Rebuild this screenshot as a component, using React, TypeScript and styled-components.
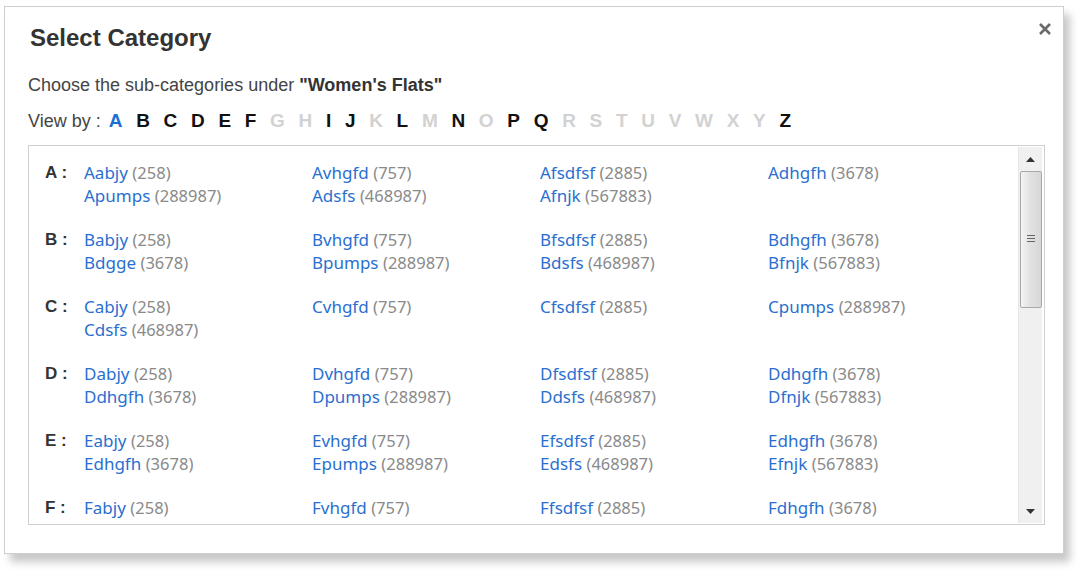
import React from "react";
import styled, { createGlobalStyle } from "styled-components";

const Global = createGlobalStyle`
  html, body { margin: 0; padding: 0; background: #ffffff; }
  body { font-family: "Liberation Sans", Arial, sans-serif; }
  * { box-sizing: border-box; }
`;

const Page = styled.div`
  width: 1080px;
  height: 572px;
  padding: 6px 0 0 4px;
  background: #fff;
`;

const Modal = styled.div`
  position: relative;
  width: 1060px;
  height: 548px;
  background: #fff;
  border: 1px solid #cfcfcf;
  box-shadow: 6px 8px 8px rgba(0, 0, 0, 0.22);
  padding: 14px 18px 0 23px;
`;

const Title = styled.h1`
  margin: 0;
  font-size: 24px;
  line-height: 34px;
  font-weight: bold;
  color: #333;
  padding-left: 2px;
`;

const Close = styled.button`
  position: absolute;
  top: 13px;
  right: 9px;
  width: 18px;
  height: 18px;
  padding: 0;
  border: 0;
  background: transparent;
  display: flex;
  align-items: center;
  justify-content: center;
  cursor: pointer;
`;

const Intro = styled.p`
  margin: 19px 0 0 0;
  font-size: 18px;
  line-height: 22px;
  color: #444;
  b { color: #333; }
`;

const ViewBy = styled.div`
  display: flex;
  align-items: baseline;
  margin-top: 14px;
  height: 24px;
`;

const ViewLabel = styled.span`
  font-size: 18px;
  color: #444;
  margin-right: 8px;
`;

const Letters = styled.div`
  display: flex;
  gap: 13.7px;
  align-items: baseline;
`;

const Letter = styled.span<{ $state: "active" | "on" | "off" }>`
  font-size: 19px;
  font-weight: bold;
  color: ${(p) => (p.$state === "active" ? "#1a6fd4" : p.$state === "on" ? "#111" : "#d2d2d2")};
`;

const ListBox = styled.div`
  margin-top: 11px;
  width: 1017px;
  height: 380px;
  border: 1px solid #cfcfcf;
  display: flex;
  overflow: hidden;
`;

const ListContent = styled.div`
  flex: 1;
  overflow: hidden;
  padding: 15px 0 0 16px;
  font-family: "Noto Sans", "DejaVu Sans", sans-serif;
`;

const Group = styled.div`
  display: flex;
  margin-bottom: 21px;
`;

const GroupLabel = styled.div`
  width: 39px;
  font-family: "Liberation Sans", Arial, sans-serif;
  font-size: 17px;
  font-weight: bold;
  color: #333;
  line-height: 23px;
`;

const Items = styled.div`
  display: grid;
  grid-template-columns: repeat(4, 228px);
`;

const Item = styled.div`
  line-height: 23px;
  font-size: 17px;
  white-space: nowrap;
`;

const Name = styled.a`
  color: #2a6fd0;
  text-decoration: none;
`;

const Count = styled.span`
  color: #8a8a8a;
  font-size: 16.5px;
`;

const Scrollbar = styled.div`
  width: 24px;
  margin: 1px 2px 1px 0;
  background: #f0f0f0;
  border-left: 1px solid #e6e6e6;
  display: flex;
  flex-direction: column;
  align-items: center;
`;

const Arrow = styled.div`
  height: 24px;
  width: 100%;
  display: flex;
  align-items: center;
  justify-content: center;
`;

const Thumb = styled.div`
  width: 22px;
  height: 137px;
  border: 1px solid #a9a9a9;
  border-radius: 2px;
  background: linear-gradient(to right, #f4f4f4, #e2e2e2 45%, #d7d7d7);
  display: flex;
  align-items: center;
  justify-content: center;
`;

const Grip = styled.div`
  width: 8px;
  height: 9px;
  background: repeating-linear-gradient(to bottom, #666 0 1px, transparent 1px 3px);
`;

const Track = styled.div`
  flex: 1;
`;

type Entry = [string, string];
const groups: { label: string; items: Entry[] }[] = [
  {
    label: "A",
    items: [
      ["Aabjy", "258"], ["Avhgfd", "757"], ["Afsdfsf", "2885"], ["Adhgfh", "3678"],
      ["Apumps", "288987"], ["Adsfs", "468987"], ["Afnjk", "567883"],
    ],
  },
  {
    label: "B",
    items: [
      ["Babjy", "258"], ["Bvhgfd", "757"], ["Bfsdfsf", "2885"], ["Bdhgfh", "3678"],
      ["Bdgge", "3678"], ["Bpumps", "288987"], ["Bdsfs", "468987"], ["Bfnjk", "567883"],
    ],
  },
  {
    label: "C",
    items: [
      ["Cabjy", "258"], ["Cvhgfd", "757"], ["Cfsdfsf", "2885"], ["Cpumps", "288987"],
      ["Cdsfs", "468987"],
    ],
  },
  {
    label: "D",
    items: [
      ["Dabjy", "258"], ["Dvhgfd", "757"], ["Dfsdfsf", "2885"], ["Ddhgfh", "3678"],
      ["Ddhgfh", "3678"], ["Dpumps", "288987"], ["Ddsfs", "468987"], ["Dfnjk", "567883"],
    ],
  },
  {
    label: "E",
    items: [
      ["Eabjy", "258"], ["Evhgfd", "757"], ["Efsdfsf", "2885"], ["Edhgfh", "3678"],
      ["Edhgfh", "3678"], ["Epumps", "288987"], ["Edsfs", "468987"], ["Efnjk", "567883"],
    ],
  },
  {
    label: "F",
    items: [
      ["Fabjy", "258"], ["Fvhgfd", "757"], ["Ffsdfsf", "2885"], ["Fdhgfh", "3678"],
      ["Fdhgfh", "3678"], ["Fpumps", "288987"], ["Fdsfs", "468987"], ["Ffnjk", "567883"],
    ],
  },
];

const alphabet = "ABCDEFGHIJKLMNOPQRSTUVWXYZ".split("");
const enabled = new Set("ABCDEFIJLNPQZ".split(""));

export default function App() {
  return (
    <>
      <Global />
      <Page>
        <Modal>
          <Title>Select Category</Title>
          <Close aria-label="Close">
            <svg width="14" height="14" viewBox="0 0 14 14">
              <path d="M2 2 L12 12 M12 2 L2 12" stroke="#6a6a6a" strokeWidth="2.6" strokeLinecap="butt" />
            </svg>
          </Close>
          <Intro>
            Choose the sub-categories under <b>"Women's Flats"</b>
          </Intro>
          <ViewBy>
            <ViewLabel>View by :</ViewLabel>
            <Letters>
              {alphabet.map((l) => (
                <Letter key={l} $state={l === "A" ? "active" : enabled.has(l) ? "on" : "off"}>
                  {l}
                </Letter>
              ))}
            </Letters>
          </ViewBy>
          <ListBox>
            <ListContent>
              {groups.map((g) => (
                <Group key={g.label}>
                  <GroupLabel>{g.label} :</GroupLabel>
                  <Items>
                    {g.items.map(([n, c], i) => (
                      <Item key={i}>
                        <Name href="#">{n}</Name> <Count>({c})</Count>
                      </Item>
                    ))}
                  </Items>
                </Group>
              ))}
            </ListContent>
            <Scrollbar>
              <Arrow>
                <svg width="9" height="5" viewBox="0 0 9 5"><path d="M0 5 L4.5 0 L9 5 Z" fill="#333" /></svg>
              </Arrow>
              <Thumb>
                <Grip />
              </Thumb>
              <Track />
              <Arrow>
                <svg width="9" height="5" viewBox="0 0 9 5"><path d="M0 0 L4.5 5 L9 0 Z" fill="#333" /></svg>
              </Arrow>
            </Scrollbar>
          </ListBox>
        </Modal>
      </Page>
    </>
  );
}
